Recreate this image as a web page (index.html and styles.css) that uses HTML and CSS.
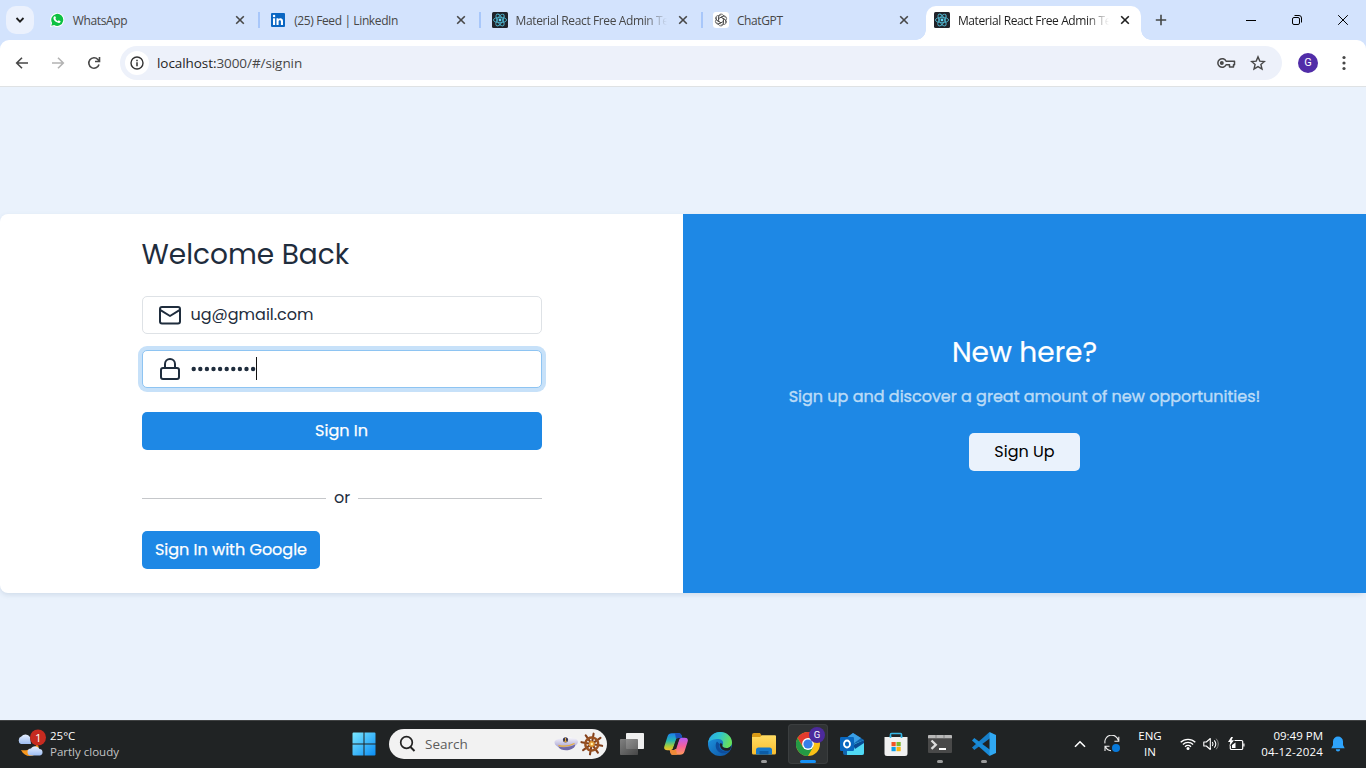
FILE: index.html
```html
<!DOCTYPE html>
<html lang="en">
<head>
<meta charset="utf-8">
<title>Material React Free Admin Template</title>
<link rel="stylesheet" href="styles.css">
</head>
<body>
<svg class="defs" aria-hidden="true">
  <defs>
    <symbol id="close" viewBox="0 0 10 10"><path d="M1.2 1.2l7.6 7.6M8.8 1.2l-7.6 7.6" fill="none" stroke="currentColor" stroke-width="1.6"/></symbol>
    <symbol id="react" viewBox="0 0 16 16">
      <rect width="16" height="16" rx="1.5" fill="#20232a"/>
      <g fill="none" stroke="#4fb3cc" stroke-width=".9">
        <ellipse cx="8" cy="8" rx="6.6" ry="2.7"/>
        <ellipse cx="8" cy="8" rx="6.6" ry="2.7" transform="rotate(60 8 8)"/>
        <ellipse cx="8" cy="8" rx="6.6" ry="2.7" transform="rotate(120 8 8)"/>
      </g>
      <circle cx="8" cy="8" r="1.4" fill="#61dafb"/>
    </symbol>
    <linearGradient id="win" x1="0" y1="0" x2="1" y2="1"><stop offset="0" stop-color="#7ae8ff"/><stop offset="1" stop-color="#0a8cf5"/></linearGradient>
    <linearGradient id="cloud" x1="0" y1="0" x2="0" y2="1"><stop offset="0" stop-color="#e6efff"/><stop offset="1" stop-color="#9dbdf2"/></linearGradient>
    <linearGradient id="cpA" x1="0" y1="0" x2="0" y2="1"><stop offset="0" stop-color="#1c7ff0"/><stop offset=".45" stop-color="#25b8b0"/><stop offset=".75" stop-color="#a5cc3c"/><stop offset="1" stop-color="#f6c02c"/></linearGradient>
    <linearGradient id="cpB" x1="0" y1="0" x2="0" y2="1"><stop offset="0" stop-color="#b65cf5"/><stop offset=".5" stop-color="#f4609c"/><stop offset="1" stop-color="#ff9a5a"/></linearGradient>
    <linearGradient id="edA" x1="0" y1="0" x2="1" y2=".3"><stop offset="0" stop-color="#2aa6e8"/><stop offset=".5" stop-color="#2fc5cf"/><stop offset="1" stop-color="#66e05c"/></linearGradient>
    <linearGradient id="edB" x1="0" y1="0" x2="1" y2="1"><stop offset="0" stop-color="#1f9be6"/><stop offset="1" stop-color="#0c4fa0"/></linearGradient>
    <linearGradient id="fold" x1="0" y1="0" x2="0" y2="1"><stop offset="0" stop-color="#ffdc63"/><stop offset="1" stop-color="#f9bd2e"/></linearGradient>
    <linearGradient id="tv" x1="0" y1="0" x2="1" y2="1"><stop offset="0" stop-color="#8d8d8d"/><stop offset="1" stop-color="#4b4b4b"/></linearGradient>
    <linearGradient id="cap" x1="0" y1="0" x2="0" y2="1"><stop offset="0" stop-color="#ffffff"/><stop offset="1" stop-color="#9a94cc"/></linearGradient>
  </defs>
</svg>

<header class="tabstrip">
  <button class="tab-search"><svg width="12" height="12" viewBox="0 0 12 12"><path d="M2.5 4l3.5 3.6L9.5 4" fill="none" stroke="#1f1f1f" stroke-width="1.8"/></svg></button>
  <div class="tab">
    <svg class="fav" viewBox="0 0 16 16"><path d="M1.1 15l1-3.7A7 7 0 1 1 4.7 14z" fill="#fff"/><path d="M2.3 13.8l.8-2.9A6 6 0 1 1 5.2 13z" fill="#0dc143"/><path d="M5.2 4.4c.5-.4 1-.3 1.2.2l.5 1.2c.1.4-.3.8-.5 1 .5 1.1 1.400 1.900 2.500 2.400.300-.300.700-1 1.100-.8l1.300.6c.5.3.2 1-.2 1.400-1 .9-2.500.5-3.900-.3C5.600 9.100 4.400 7.500 4.400 6c0-.7.300-1.200.8-1.600z" fill="#fff"/></svg>
    <span class="tab-title">WhatsApp</span><svg class="x"><use href="#close"/></svg>
  </div>
  <i class="sep"></i>
  <div class="tab">
    <svg class="fav" viewBox="0 0 16 16"><rect x="1" y="1" width="14" height="14" rx="1" fill="#0a66c2"/><rect x="3" y="6.300" width="2.100" height="6.700" fill="#fff"/><circle cx="4.050" cy="4.100" r="1.250" fill="#fff"/><path d="M6.500 6.300h2v1c1-1.700 4.500-1.700 4.500 1.800V13h-2.100V9.600c0-2-2.300-1.900-2.300 0V13H6.500z" fill="#fff"/></svg>
    <span class="tab-title">(25) Feed | LinkedIn</span><svg class="x"><use href="#close"/></svg>
  </div>
  <i class="sep"></i>
  <div class="tab">
    <svg class="fav"><use href="#react"/></svg>
    <span class="tab-title fade">Material React Free Admin Te</span><svg class="x"><use href="#close"/></svg>
  </div>
  <i class="sep"></i>
  <div class="tab">
    <svg class="fav" viewBox="0 0 16 16"><rect width="16" height="16" rx="3" fill="#fff"/><g fill="none" stroke="#333" stroke-width=".65"><path id="petal" d="M5.600 8V4.500C5.600 1.500 10 1.300 10.600 3.800M5.600 6.600L9 4.700c1.700-1 3 .1 3.600 1"/><use href="#petal" transform="rotate(60 8 8)"/><use href="#petal" transform="rotate(120 8 8)"/><use href="#petal" transform="rotate(180 8 8)"/><use href="#petal" transform="rotate(240 8 8)"/><use href="#petal" transform="rotate(300 8 8)"/></g></svg>
    <span class="tab-title">ChatGPT</span><svg class="x"><use href="#close"/></svg>
  </div>
  <i class="sep hidden"></i>
  <div class="tab active">
    <svg class="fav"><use href="#react"/></svg>
    <span class="tab-title fade">Material React Free Admin Te</span><svg class="x"><use href="#close"/></svg>
  </div>
  <svg class="new-tab" width="12" height="12" viewBox="0 0 12 12"><path d="M6 .8v10.400M.8 6h10.400" stroke="#444746" stroke-width="1.600"/></svg>
  <div class="window-controls">
    <svg viewBox="0 0 12 12"><path d="M1 6.500h10" stroke="#000"/></svg>
    <svg viewBox="0 0 12 12"><g fill="none" stroke="#000"><rect x="1.500" y="3.500" width="7" height="7" rx="1.500"/><path d="M3.500 1.500H8a2.500 2.500 0 0 1 2.500 2.500v4.500"/></g></svg>
    <svg viewBox="0 0 12 12"><path d="M1.200 1.200l9.600 9.600M10.800 1.200l-9.600 9.600" stroke="#000"/></svg>
  </div>
</header>

<nav class="toolbar">
  <svg class="nav-icon" viewBox="0 0 16 16"><path d="M14 8H2.800M8 2.700L2.700 8 8 13.300" fill="none" stroke="#474747" stroke-width="1.600"/></svg>
  <svg class="nav-icon" viewBox="0 0 16 16"><path d="M2 8h11.200M8 2.700L13.300 8 8 13.300" fill="none" stroke="#b3b3b3" stroke-width="1.600"/></svg>
  <svg class="nav-icon" viewBox="0 0 16 16"><path d="M13 9.500A5.200 5.200 0 1 1 11.900 4.500L13.500 6.200M13.500 2v4.500H9" fill="none" stroke="#474747" stroke-width="1.600"/></svg>
  <div class="omnibox">
    <span class="site-info"><svg width="14" height="14" viewBox="0 0 14 14"><circle cx="7" cy="7" r="6" fill="none" stroke="#333" stroke-width="1.400"/><path d="M7 6.200v4M7 3.700v1.500" stroke="#333" stroke-width="1.500"/></svg></span>
    <span class="url"><b>localhost:</b>3000/#/signin</span>
    <svg class="key" width="20" height="14" viewBox="0 0 20 14"><path d="M10.100 5.300A4.300 4.300 0 1 0 10.100 8.700H13.500V11H17.500V8.700H18.500V5.300z" fill="none" stroke="#474747" stroke-width="1.500" stroke-linejoin="round"/><circle cx="5.800" cy="7" r="2" fill="#474747"/></svg>
    <svg class="star" width="16" height="16" viewBox="0 0 16 16"><path d="M8 1.900l1.800 4.200 4.600.4-3.500 3 1.100 4.500L8 11.600 4 14l1.100-4.500-3.500-3 4.600-.4z" fill="none" stroke="#474747" stroke-width="1.400"/></svg>
  </div>
  <span class="avatar">G</span>
  <svg class="more" width="4" height="16" viewBox="0 0 4 16" fill="#474747"><circle cx="2" cy="2.500" r="1.600"/><circle cx="2" cy="8" r="1.600"/><circle cx="2" cy="13.500" r="1.600"/></svg>
</nav>

<main class="page">
  <section class="card">
    <div class="signin">
      <form class="form">
        <h1 class="heading">Welcome Back</h1>
        <div class="field">
          <svg width="24" height="24" viewBox="0 0 24 24" fill="none" stroke="#1f2d3d" stroke-width="2" stroke-linecap="round" stroke-linejoin="round"><rect x="2" y="4" width="20" height="16.500" rx="2"/><path d="M2.500 7.200L12 13l9.500-5.800"/></svg>
          <span class="email">ug@gmail.com</span>
        </div>
        <div class="field focused">
          <svg width="24" height="24" viewBox="0 0 24 24" fill="none" stroke="#1f2d3d" stroke-width="2" stroke-linejoin="round"><rect x="3" y="11" width="18" height="11" rx="2"/><path d="M7 11V7a5 5 0 0 1 10 0v4"/></svg>
          <svg class="dots" width="66" height="6" viewBox="0 0 66 6"><path d="M2.700 3h60" fill="none" stroke="#1f2d3d" stroke-width="4.400" stroke-linecap="round" stroke-dasharray="0 6.600"/></svg><span class="caret"></span>
        </div>
        <button type="button" class="btn wide">Sign In</button>
        <div class="divider"><span>or</span></div>
        <button type="button" class="btn google">Sign In with Google</button>
      </form>
    </div>
    <aside class="promo">
      <h2 class="heading promo-title">New here?</h2>
      <p class="promo-text">Sign up and discover a great amount of new opportunities!</p>
      <button type="button" class="btn light">Sign Up</button>
    </aside>
  </section>
</main>

<footer class="taskbar">
  <div class="weather">
    <svg width="30" height="30" viewBox="0 0 30 30">
      <path d="M4 15a4 4 0 0 1 .3-7.400A5.200 5.200 0 0 1 13 8l1 7z" fill="url(#cloud)"/>
      <path d="M4 21c6 1 14-1 16-6 3 3 2 8-2 10.500C13 28.500 7 27 4 21z" fill="#f8971d"/>
      <path d="M14 26.500a3.500 3.500 0 0 1 0-7 5 5 0 0 1 8.500.5 3.300 3.300 0 0 1 .5 6.500z" fill="url(#cloud)"/>
      <circle cx="21" cy="8.500" r="8" fill="#c62b20"/>
      <text x="21.400" y="12.600" text-anchor="middle" font-family="Open Sans, sans-serif" font-size="11.500" fill="#fff">1</text>
    </svg>
    <div class="weather-text"><span>25°C</span><span class="muted">Partly cloudy</span></div>
  </div>
  <svg class="start" width="24" height="24" viewBox="0 0 24 24"><path d="M1.500.5H11.500V11.500H.5V1.500a1 1 0 0 1 1-1zM12.500.5h10a1 1 0 0 1 1 1v10h-11zM.5 12.500h11v11h-10a1 1 0 0 1-1-1zM12.500 12.500h11v10a1 1 0 0 1-1 1h-10z" fill="url(#win)"/></svg>
  <div class="search">
    <svg width="18" height="18" viewBox="0 0 18 18"><circle cx="7.500" cy="7.500" r="5.800" fill="none" stroke="#222" stroke-width="1.700"/><path d="M11.500 12l4 4" stroke="#222" stroke-width="2"/></svg>
    <span>Search</span>
    <svg class="nautical" width="52" height="26" viewBox="0 0 52 26">
      <path d="M1.500 11.500C1.500 8 7 8.500 12.500 5.500 18 7 25 6.500 25 11c0 2-2 3-4.500 4.500l-1.500 2c-5 1.500-10 1-12.500-1-2.500-1-5-2.500-5-5z" fill="url(#cap)"/>
      <path d="M5 15.500c6 1.500 12 .5 17-2 1 2-2 4.500-6 5.500-4 .8-9 0-11-3.500z" fill="#6f69a8"/>
      <path d="M5.500 14.300c6 1.800 11 .8 16-1.800" stroke="#e9ad35" stroke-width="1.300" fill="none"/><circle cx="12.500" cy="8.800" r="2.600" fill="#3b3a56"/><path d="M12.500 6.800v4M11 9.800c1 1.500 2 1.500 3 0" stroke="#e3aa3d" fill="none"/>
      <g transform="translate(38.800 13) rotate(10)"><g stroke="#83401b" stroke-width="2.100" stroke-linecap="round"><path d="M0-10.500V10.500M-10.500 0H10.500M-7.500-7.500L7.500 7.500M7.500-7.500L-7.500 7.500"/></g><circle r="6.500" fill="none" stroke="#9a5221" stroke-width="2.400"/><circle r="2.900" fill="#e39b35"/><circle r="1.200" fill="#fff0b4"/></g>
    </svg>
  </div>
  <div class="apps">
    <div class="app"><svg viewBox="0 0 24 24"><rect x="6" y="1" width="18" height="16" rx=".8" fill="#eee"/><rect y="7" width="18" height="16" rx=".8" fill="url(#tv)" opacity=".88"/></svg></div>
    <div class="app"><svg viewBox="0 0 24 24">
      <path d="M8 1.200h7c1.500 0 2.200 1 2.600 2.400l.7 2.400h-3.300c-1.500 0-2.400.6-2.800 2L9.500 15c-.7 2.300-1.600 3.200-4 3.200H3.300C.6 18.200-.4 16.800.4 14.200L3.500 4.500C4.200 2.200 5.600 1.200 8 1.200z" fill="url(#cpA)"/>
      <path d="M16 22.800H9c-1.500 0-2.200-1-2.600-2.400L5.700 18h3.300c1.500 0 2.400-.6 2.800-2L14.500 9c.7-2.300 1.600-3.200 4-3.200h2.200c2.700 0 3.700 1.400 2.900 4l-3.100 9.700c-.7 2.300-2.100 3.300-4.500 3.300z" fill="url(#cpB)"/>
      <path d="M11 1.200h4c1.500 0 2.200 1 2.600 2.400L18.300 6h-4c-1 0-1.800.4-2.200 1.500z" fill="#1d4fb8"/><path d="M13 22.800H9c-1.500 0-2.200-1-2.600-2.400L5.700 18h4c1 0 1.800-.4 2.200-1.500z" fill="#ef8a37"/>
      <path d="M12.200 6.800H15.400L12.200 17H8.900z" fill="#202324"/>
    </svg></div>
    <div class="app"><svg viewBox="0 0 24 24">
      <circle cx="12" cy="12" r="12" fill="url(#edB)"/>
      <path d="M.1 11C1 4.500 6 0 12.200 0 19 0 24 5 24 10.400c0 3.600-2.700 5.600-5.700 5.600-3.300 0-4.600-1.500-4-2.700 2.200-3-.2-6.300-3.700-6.300C6 7 1.500 8.200.1 11z" fill="url(#edA)"/>
      <path d="M9 9.500C7 12 7 17 11 20c3 2 7 2 11.500-1.600-1.500.8-3.400 1.100-5 1C13 19 10 15.500 12 12.500z" fill="#0d4c9c"/><path d="M12.100 11.500c1.200-.5 2.600.4 2.300 1.600-.6 1.500.8 2.900 3.900 2.900 2 0 3.800-.8 4.900-2.300-.3 2-.6 3-1.300 4.200-4 2.200-10.700.3-9.800-6.400z" fill="#202324"/>
    </svg></div>
    <div class="app"><svg viewBox="0 0 24 24"><path d="M0 3a2 2 0 0 1 2-2h6l2 3h12a2 2 0 0 1 2 2v3H0z" fill="#d99a16"/><path d="M0 5h8l2-1.700h13a1 1 0 0 1 1 1V21a1.500 1.500 0 0 1-1.500 1.500h-21A1.500 1.500 0 0 1 0 21z" fill="url(#fold)"/><path d="M4 22.500V18a2.500 2.500 0 0 1 2.500-2.500h11A2.500 2.500 0 0 1 20 18v4.500z" fill="#1678c9"/><path d="M7.500 19h9v3.500h-9z" fill="#0c5ca5"/></svg><i class="run"></i></div>
    <div class="app current"><svg viewBox="0 0 24 24"><circle cx="12" cy="12" r="12" fill="#fbc116"/><path d="M1.600 6A12 12 0 0 1 22.400 6H12L7 15z" fill="#e33b2e"/><path d="M1.600 6A12 12 0 0 0 12 24l5.200-9H6.800z" fill="#249a45"/><circle cx="12" cy="12" r="5.900" fill="#fff"/><circle cx="12" cy="12" r="4.600" fill="#377ee8"/></svg><span class="profile-badge">G</span><i class="run wide-run"></i></div>
    <div class="app"><svg viewBox="0 0 24 24"><path d="M3 8L13 1l11 7v13a2 2 0 0 1-2 2H5a2 2 0 0 1-2-2z" fill="#1265ae"/><path d="M13 1l8 5-8 6-8-5z" fill="#3a9fe5"/><path d="M7 15l17-7v13a2 2 0 0 1-2 2H7z" fill="#50d9f4"/><path d="M13 13L24 8v3l-9 6z" fill="#094b94"/><rect y="5" width="14" height="14" rx="1.200" fill="#0967bf"/><ellipse cx="7" cy="12" rx="3" ry="3.500" fill="none" stroke="#fff" stroke-width="1.900"/></svg></div>
    <div class="app"><svg viewBox="0 0 24 24"><path d="M6.500 6V2.500a1 1 0 0 1 1-1h9a1 1 0 0 1 1 1V6" fill="none" stroke="#36b6e5" stroke-width="1.600"/><path d="M.5 5h23v16.500A2.500 2.500 0 0 1 21 24H3a2.500 2.500 0 0 1-2.500-2.500z" fill="#f1f1f1"/><path d="M6.500 6V4M17.500 6V4" stroke="#36b6e5" stroke-width="1.600"/><rect x="7.500" y="10" width="4.200" height="4.200" fill="#f15325"/><rect x="12.500" y="10" width="4.200" height="4.200" fill="#7db72f"/><rect x="7.500" y="15" width="4.200" height="4.200" fill="#0b9de8"/><rect x="12.500" y="15" width="4.200" height="4.200" fill="#f8b510"/></svg></div>
    <div class="app"><svg viewBox="0 0 24 24"><rect y="3" width="24" height="18" rx="1" fill="#494949"/><path d="M0 6.300V4a1 1 0 0 1 1-1h22a1 1 0 0 1 1 1v2.300z" fill="#b7b7b7"/><path d="M8 3v3.300M16 3v3.300" stroke="#777" stroke-width=".8"/><path d="M3.500 8.500l4.300 4.200-4.300 4.200" fill="none" stroke="#ddd" stroke-width="2.300"/><path d="M11 17h7" stroke="#fff" stroke-width="2"/></svg><i class="run"></i></div>
    <div class="app"><svg viewBox="0 0 24 24"><path d="M17.500 0L0 15.500 2.300 18 19 5.500z" fill="#177fca"/><path d="M17.500 24L0 8.500 2.300 6 19 18.500z" fill="#198bd8"/><path d="M17.500 0L24 3v18l-6.500 3z" fill="#30a8f2"/></svg><i class="run"></i></div>
  </div>
  <div class="tray">
    <svg class="chev" width="12" height="8" viewBox="0 0 12 8"><path d="M1 6.800L6 1.800l5 5" fill="none" stroke="#fff" stroke-width="1.600"/></svg>
    <svg class="sync" width="18" height="18" viewBox="0 0 18 18"><path d="M2 8.300A6.600 6.600 0 0 1 15.300 5.500M15.800 1.800v4.400h-4.400M8 15.700A6.600 6.600 0 0 1 2.400 11.500M2 16v-4.700h4.500" fill="none" stroke="#eee" stroke-width="1.100"/><circle cx="13" cy="13" r="4" fill="#087adb"/></svg>
    <div class="lang"><span>ENG</span><span>IN</span></div>
    <svg class="wifi" width="16" height="14" viewBox="0 0 16 14"><g fill="none" stroke="#fff" stroke-width="1.300"><path d="M.7 5.300a10.400 10.400 0 0 1 14.600 0M2.900 7.500a7.300 7.300 0 0 1 10.200 0M5 9.700a4.300 4.300 0 0 1 6 0"/></g><circle cx="8" cy="11.500" r="1.500" fill="#fff"/></svg>
    <svg class="vol" width="17" height="14" viewBox="0 0 17 14"><path d="M.8 5v4h2.500l4 3.500v-11L3.300 5z" fill="none" stroke="#fff" stroke-width="1.100" stroke-linejoin="round"/><path d="M9.300 5q1.500 2 0 4M11.300 3.300q3 3.700 0 7.400" fill="none" stroke="#fff" stroke-width="1.100"/><path d="M13.200 1.700q4.200 5.300 0 10.600" fill="none" stroke="#888"/></svg>
    <svg class="bat" width="17" height="14" viewBox="0 0 17 14"><path d="M6.500 3.500h7a1.200 1.200 0 0 1 1.200 1.200v6.600a1.200 1.200 0 0 1-1.200 1.200h-10a1.200 1.200 0 0 1-1.200-1.200V8.500" fill="none" stroke="#fff" stroke-width="1.200"/><path d="M15.300 6.500h1.200v3h-1.200zM4 8l3.500-2.500V11H4zM3.200 0L0 5h2.200L1.500 9 6 3.300H3.500L5 0z" fill="#fff"/></svg>
    <div class="clock"><span>09:49 PM</span><span class="date">04-12-2024</span></div>
    <svg class="bell" width="14" height="16" viewBox="0 0 14 16"><path d="M7 .5a5 5 0 0 1 5 5V9l1.700 3.300H.3L2 9V5.500a5 5 0 0 1 5-5zM4.800 13.200h4.400a2.200 2.200 0 0 1-4.400 0z" fill="#2ea3fb"/></svg>
  </div>
</footer>
</body>
</html>
```

FILE: styles.css
```css
* { box-sizing: border-box; }
body { margin: 0; width: 1366px; height: 768px; overflow: hidden; display: flex; flex-direction: column; background: #d3e3fd; font-family: "Open Sans", "Noto Sans", sans-serif; }
svg { display: block; flex: none; }
button { border: 0; font: inherit; padding: 0; }
.defs { position: absolute; width: 0; height: 0; }

/* Tab strip */
.tabstrip { height: 40px; flex: none; display: flex; align-items: center; padding: 0 0 0 6px; }
.tab-search { width: 28px; height: 28px; border-radius: 10px; background: #ebf1fd; margin-right: 6.400px; display: grid; place-items: center; flex: none; }
.tab { width: 215px; height: 34px; margin-top: 6px; padding: 0 11px 6px 8px; display: flex; align-items: center; flex: none; color: #474747; }
.fav { width: 16px; height: 16px; margin-right: 8px; }
.tab-title { width: 152px; padding-top: 1px; white-space: nowrap; font-size: 12px; line-height: 18px; letter-spacing: -0.380px; }
.fade { mask-image: linear-gradient(90deg, #000 128px, transparent 151px); }
.x { width: 10px; height: 10px; margin-left: auto; }
.sep { width: 2px; height: 16px; margin: 0 2.200px; background: #a8c7fa; flex: none; }
.tab-search + .tab { margin-left: .400px; }
.sep.hidden { margin-right: 1.800px; background: transparent; }
.active { position: relative; background: #fff; border-radius: 10px 10px 0 0; color: #1f1f1f; }
.active::before, .active::after { content: ""; position: absolute; bottom: 0; width: 10px; height: 10px; }
.active::before { right: 100%; background: radial-gradient(circle at 0 0, transparent 9.500px, #fff 10px); }
.active::after { left: 100%; background: radial-gradient(circle at 100% 0, transparent 9.500px, #fff 10px); }
.new-tab { margin-left: 14px; }
.window-controls { display: flex; gap: 34px; margin-left: auto; padding-right: 17px; }
.window-controls svg { width: 12px; height: 12px; }

/* Toolbar */
.toolbar { height: 47px; flex: none; background: #fff; border-bottom: 1px solid #dfe2e4; border-radius: 9px 9px 0 0; display: flex; align-items: center; padding-left: 14px; }
.nav-icon { width: 16px; height: 16px; margin-right: 20px; }
.omnibox { width: 1162px; height: 34px; margin-left: -2px; border-radius: 17px; background: #edf1fa; display: flex; align-items: center; padding: 0 16px 0 5px; }
.site-info { width: 24px; height: 24px; border-radius: 50%; background: #fff; display: grid; place-items: center; }
.url { margin-left: 8px; font-size: 13.500px; letter-spacing: -0.070px; color: #474747; white-space: nowrap; }
.url b { font-weight: 400; color: #1f1f1f; }
.key { margin-left: auto; margin-right: 14px; }
.avatar { width: 20px; height: 20px; border-radius: 50%; background: #512da8; color: #fff; font: 11px/20px Roboto, sans-serif; text-align: center; margin-left: 16px; }
.more { margin-left: 24px; }

/* Sign-in page */
.page { flex: 1; background: #eaf2fc; display: flex; align-items: center; font-family: Poppins, Inter, sans-serif; color: #1f2d3d; }
.card { width: 100%; height: 379px; display: flex; border-radius: 8px; background: #fff; box-shadow: 0 2px 5px rgba(60, 90, 130, .14); }
.signin { width: 683px; padding-top: 24px; display: flex; justify-content: center; }
.form { width: 400px; display: flex; flex-direction: column; margin-left: 1px; }
.heading { margin: 0; height: 34px; font-size: 28px; line-height: 34px; font-weight: 400; white-space: nowrap; }
.form .heading { margin-bottom: 24px; text-indent: -0.500px; }
.field { height: 38px; border: 1px solid #dee2e6; border-radius: 5px; margin-bottom: 16px; padding-left: 15px; display: flex; align-items: center; background: #fff; }
.field span { flex: none; }
.email { margin-left: 8.500px; padding-bottom: 2px; font-size: 16px; }
.focused { border-color: #8ec4f2; box-shadow: 0 0 0 4px #c7e1f9; margin-bottom: 24px; }
.dots { margin-left: 9px; }
.caret { width: 1px; height: 23px; margin: 0 0 2px -1px; background: #111; }
.btn { height: 38px; border-radius: 5px; padding-bottom: 2px; background: #1e88e5; color: #fff; font-size: 16px; white-space: nowrap; -webkit-text-stroke: .250px currentColor; }
.wide { padding-right: 1px; }
.divider { height: 24px; margin: 36px 0 21px; display: flex; align-items: center; gap: 8px; font-size: 16px; line-height: 24px; }
.divider::before, .divider::after { content: ""; flex: 1; height: 1px; background: #c5c7ca; }
.google { width: 178px; }
.promo { flex: 1; background: #1e88e5; display: flex; flex-direction: column; align-items: center; justify-content: center; }
.promo-title { color: #fff; margin-bottom: 15px; -webkit-text-stroke: .200px #fff; }
.promo-text { margin: 0 0 25px; height: 23px; line-height: 23px; font-size: 16px; font-weight: 400; color: #bbdbf7; -webkit-text-stroke: .400px #bbdbf7; white-space: nowrap; }
.light { width: 111px; background: #eaf2fc; color: #000; -webkit-text-stroke: 0; }

/* Taskbar */
.taskbar { height: 48px; flex: none; background: #202324; border-top: 1px solid #404243; padding-bottom: 1px; display: flex; align-items: center; color: #fff; font-size: 11.500px; }
.weather { width: 336px; padding-left: 17px; display: flex; gap: 3px; flex: none; }
.weather-text { display: flex; flex-direction: column; line-height: 16px; white-space: nowrap; margin-top: -1px; }
.muted { color: #c3c4c5; }
.start { margin-left: 15.500px; }
.search { width: 218px; height: 30px; margin-left: 13.500px; border-radius: 15px; background: #f2f2f2; display: flex; align-items: center; padding: 0 2px 0 10px; gap: 8px; color: #5c5c5c; font-size: 13.500px; flex: none; }
.nautical { margin-left: auto; }
.apps { display: flex; margin-left: 3px; gap: 4px; padding-left: 2px; }
.app { position: relative; width: 40px; height: 40px; display: grid; place-items: center; flex: none; }
.app > svg { width: 24px; height: 24px; }
.current { background: #303334; border-radius: 4px; box-shadow: inset 0 0 0 1px #3b3e3f; }
.profile-badge { position: absolute; left: 21px; top: 3px; width: 16px; height: 16px; border-radius: 50%; background: #4c2a9c; font: 9.500px/16px Roboto, sans-serif; text-align: center; }
.run { position: absolute; left: 17px; bottom: 1px; width: 6px; height: 3px; border-radius: 2px; background: #9b9c9d; }
.wide-run { left: 12px; width: 16px; background: #1590f5; }
.tray { display: flex; align-items: center; margin-left: auto; padding-right: 21px; }
.sync { margin-left: 17px; }
.lang { width: 30px; margin-left: 14px; display: flex; flex-direction: column; align-items: center; line-height: 16px; }
.wifi { margin-left: 15px; }
.vol { margin-left: 7px; }
.bat { margin-left: 8px; }
.clock { width: 66px; margin: -1px 0 0 12px; display: flex; flex-direction: column; align-items: flex-end; line-height: 16px; white-space: nowrap; }
.date { letter-spacing: .180px; }
.bell { margin-left: 8px; }
```
